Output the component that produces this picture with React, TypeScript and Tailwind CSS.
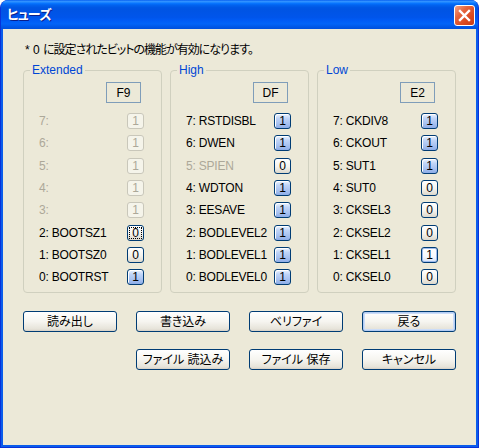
import React from "react";

type Bit = {
  n: number;
  name: string;
  v: 0 | 1;
  dis?: boolean;
  dimLabel?: boolean;
  focus?: boolean;
  hot?: boolean;
};

type Group = { title: string; value: string; bits: Bit[] };

const groups: Group[] = [
  {
    title: "Extended",
    value: "F9",
    bits: [
      { n: 7, name: "", v: 1, dis: true },
      { n: 6, name: "", v: 1, dis: true },
      { n: 5, name: "", v: 1, dis: true },
      { n: 4, name: "", v: 1, dis: true },
      { n: 3, name: "", v: 1, dis: true },
      { n: 2, name: "BOOTSZ1", v: 0, focus: true },
      { n: 1, name: "BOOTSZ0", v: 0 },
      { n: 0, name: "BOOTRST", v: 1 },
    ],
  },
  {
    title: "High",
    value: "DF",
    bits: [
      { n: 7, name: "RSTDISBL", v: 1 },
      { n: 6, name: "DWEN", v: 1 },
      { n: 5, name: "SPIEN", v: 0, dimLabel: true },
      { n: 4, name: "WDTON", v: 1 },
      { n: 3, name: "EESAVE", v: 1 },
      { n: 2, name: "BODLEVEL2", v: 1 },
      { n: 1, name: "BODLEVEL1", v: 1 },
      { n: 0, name: "BODLEVEL0", v: 1 },
    ],
  },
  {
    title: "Low",
    value: "E2",
    bits: [
      { n: 7, name: "CKDIV8", v: 1 },
      { n: 6, name: "CKOUT", v: 1 },
      { n: 5, name: "SUT1", v: 1 },
      { n: 4, name: "SUT0", v: 0 },
      { n: 3, name: "CKSEL3", v: 0 },
      { n: 2, name: "CKSEL2", v: 0 },
      { n: 1, name: "CKSEL1", v: 1, hot: true },
      { n: 0, name: "CKSEL0", v: 0 },
    ],
  },
];

function Toggle({ bit }: { bit: Bit }) {
  let cls =
    "border-[#003C74] bg-[linear-gradient(180deg,#FFFFFF_0%,#F4F3EE_55%,#DCD8CC_100%)] text-black";
  if (bit.dis) cls = "border-[#C9C7BA] bg-[#F5F4EA] text-[#ACA899]";
  else if (bit.hot)
    cls =
      "border-[#003C74] bg-[linear-gradient(180deg,#FFFFFF_0%,#F6F9FE_60%,#D5E2F8_100%)] shadow-[inset_0_0_0_1px_#9DBBEE] text-black";
  else if (bit.v === 1)
    cls =
      "border-[#003C74] bg-[linear-gradient(180deg,#EEF4FE_0%,#C0D5F8_30%,#A7C1F0_70%,#8DADE8_100%)] shadow-[inset_1px_1px_0_#FFFFFF] text-black";
  return (
    <div
      className={`flex h-[16px] w-[17px] items-center justify-center rounded-[3px] border text-[12px] leading-none ${cls}`}
    >
      {bit.focus ? (
        <span className="border border-dotted border-black px-[2px] leading-[10px]">
          {bit.v}
        </span>
      ) : (
        bit.v
      )}
    </div>
  );
}

function FuseGroup({ g }: { g: Group }) {
  return (
    <div className="relative h-[223px] w-[139px] rounded-[4px] border border-[#D0D0BF]">
      <span className="absolute -top-[8px] left-[6px] bg-[#ECE9D8] px-[2px] text-[12px] leading-[14px] text-[#0046D5]">
        {g.title}
      </span>
      <div className="flex justify-end pr-[20px] pt-[11px]">
        <div className="flex h-[21px] w-[35px] items-center justify-center border border-[#7F9DB9] text-[12px]">
          {g.value}
        </div>
      </div>
      <div className="mt-[7px] pl-[15px] pr-[17px]">
        {g.bits.map((b) => (
          <div key={b.n} className="flex h-[22.3px] items-center justify-between">
            <span
              className={`text-[12px] tracking-[-0.2px] ${b.dis || b.dimLabel ? "text-[#ACA899]" : "text-black"}`}
            >
              {b.n}:{b.name ? ` ${b.name}` : ""}
            </span>
            <Toggle bit={b} />
          </div>
        ))}
      </div>
    </div>
  );
}

function Btn({ label, def }: { label: string; def?: boolean }) {
  return (
    <button
      className={`h-[21px] w-[94px] rounded-[3px] border border-[#003C74] bg-[linear-gradient(180deg,#FFFFFF_0%,#F6F5F0_50%,#E6E3D9_90%,#D6D0C5_100%)] text-[12px] leading-none text-black [font-feature-settings:'palt'] ${
        def ? "shadow-[inset_0_0_0_1px_#B3CCF3,inset_0_0_0_2px_#CCDDF8]" : ""
      }`}
    >
      {label}
    </button>
  );
}

export default function App() {
  return (
    <div className="h-[448px] w-[479px] bg-white [font-family:'Liberation_Sans','Noto_Sans_CJK_JP',sans-serif]">
      <div className="flex h-full flex-col overflow-hidden rounded-t-[8px] border-x border-b border-[#0831D9] bg-[#0A5CEB]">
        <div className="flex h-[29px] justify-between bg-[linear-gradient(180deg,#0058EE_0%,#3593FF_4%,#288EFF_7%,#127DFF_10%,#036FFC_13%,#0262EE_18%,#0057E5_26%,#0054E3_32%,#0055EB_60%,#005BF5_70%,#0264F8_82%,#0058E8_92%,#0050DC_100%)] pl-[6px] pr-[3px]">
          <span className="self-center text-[13px] font-bold tracking-[-0.8px] text-white [font-feature-settings:'palt'] [text-shadow:1px_1px_0_#0A1E8A]">
            ヒューズ
          </span>
          <div className="mt-[5px] flex h-[21px] w-[21px] items-center justify-center rounded-[3px] border border-white bg-[linear-gradient(135deg,#F4A286_0%,#E5643E_35%,#D9481F_70%,#C63C16_100%)]">
            <svg width="13" height="13" viewBox="0 0 13 13">
              <path
                d="M2 2 L11 11 M11 2 L2 11"
                stroke="white"
                strokeWidth="2.4"
                strokeLinecap="square"
              />
            </svg>
          </div>
        </div>
        <div className="mx-[2px] mb-[2px] flex-1 bg-[#ECE9D8]">
          <p className="whitespace-pre pl-[22px] pt-[13px] text-[12px] leading-[16px] text-black">
            {"* 0 "}
            <span className="tracking-[-1px] [font-feature-settings:'palt']">
              に設定されたビットの機能が有効になります。
            </span>
          </p>
          <div className="mt-[12px] flex gap-[8px] pl-[20px]">
            {groups.map((g) => (
              <FuseGroup key={g.title} g={g} />
            ))}
          </div>
          <div className="mt-[18px] flex gap-[19px] pl-[20px]">
            <Btn label="読み出し" />
            <Btn label="書き込み" />
            <Btn label="ベリファイ" />
            <Btn label="戻る" def />
          </div>
          <div className="mt-[17px] flex gap-[19px] pl-[133px]">
            <Btn label="ファイル 読込み" />
            <Btn label="ファイル 保存" />
            <Btn label="キャンセル" />
          </div>
        </div>
      </div>
    </div>
  );
}
